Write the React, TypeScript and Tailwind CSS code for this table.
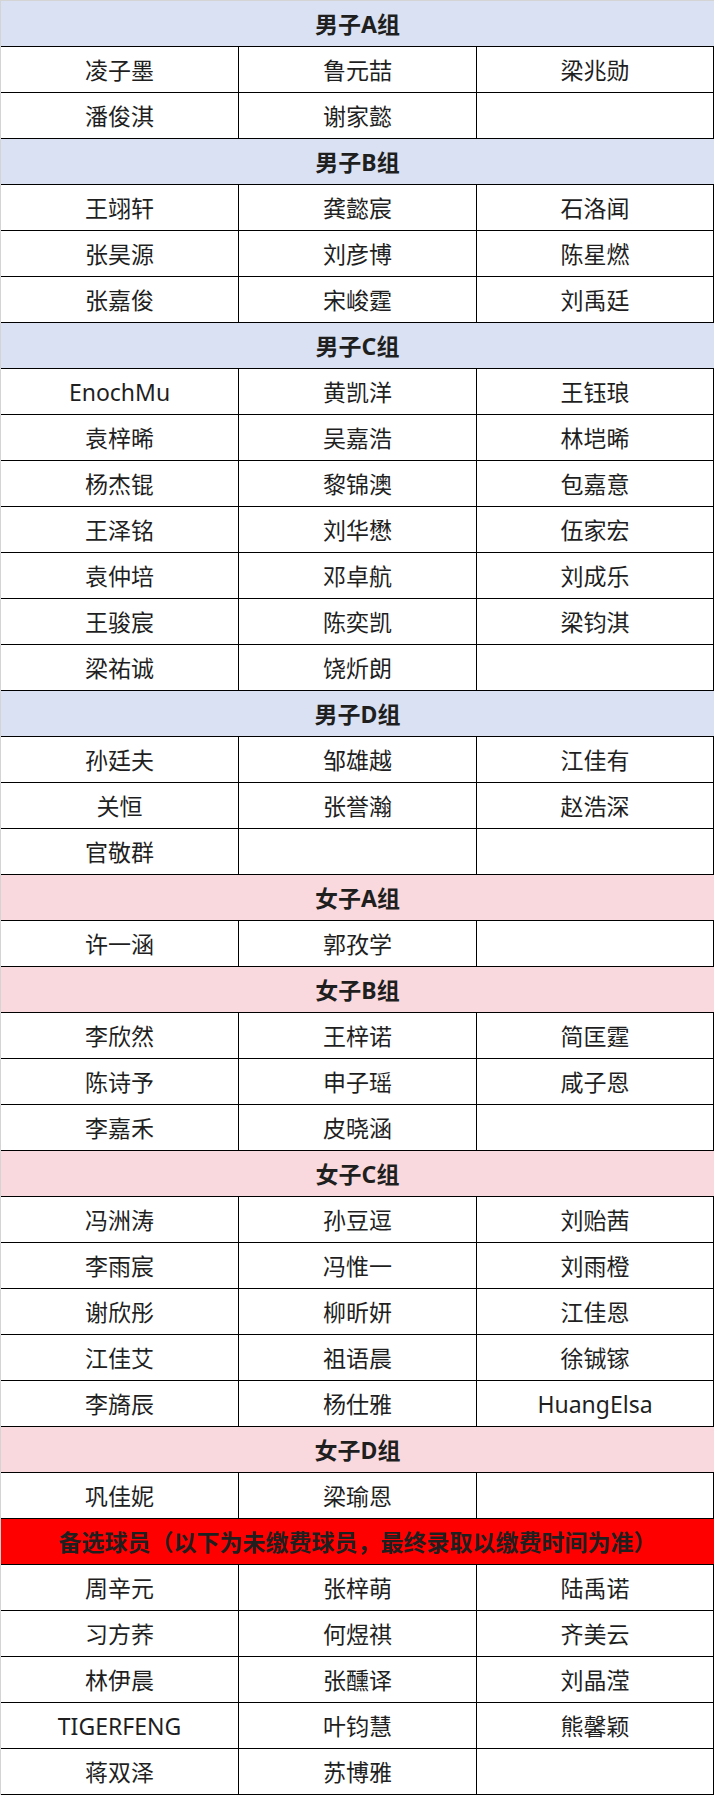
type Group = {
  title: string;
  tone: "blue" | "pink" | "red";
  names: string[];
};

const groups: Group[] = [
  { title: "男子A组", tone: "blue", names: ["凌子墨", "鲁元喆", "梁兆勋", "潘俊淇", "谢家懿"] },
  {
    title: "男子B组",
    tone: "blue",
    names: ["王翊轩", "龚懿宸", "石洛闻", "张昊源", "刘彦博", "陈星燃", "张嘉俊", "宋峻霆", "刘禹廷"],
  },
  {
    title: "男子C组",
    tone: "blue",
    names: [
      "EnochMu", "黄凯洋", "王钰琅",
      "袁梓晞", "吴嘉浩", "林垲晞",
      "杨杰锟", "黎锦澳", "包嘉意",
      "王泽铭", "刘华懋", "伍家宏",
      "袁仲培", "邓卓航", "刘成乐",
      "王骏宸", "陈奕凯", "梁钧淇",
      "梁祐诚", "饶炘朗",
    ],
  },
  {
    title: "男子D组",
    tone: "blue",
    names: ["孙廷夫", "邹雄越", "江佳有", "关恒", "张誉瀚", "赵浩深", "官敬群"],
  },
  { title: "女子A组", tone: "pink", names: ["许一涵", "郭孜学"] },
  {
    title: "女子B组",
    tone: "pink",
    names: ["李欣然", "王梓诺", "简匡霆", "陈诗予", "申子瑶", "咸子恩", "李嘉禾", "皮晓涵"],
  },
  {
    title: "女子C组",
    tone: "pink",
    names: [
      "冯洲涛", "孙豆逗", "刘贻茜",
      "李雨宸", "冯惟一", "刘雨橙",
      "谢欣彤", "柳昕妍", "江佳恩",
      "江佳艾", "祖语晨", "徐铖镓",
      "李旖辰", "杨仕雅", "HuangElsa",
    ],
  },
  { title: "女子D组", tone: "pink", names: ["巩佳妮", "梁瑜恩"] },
  {
    title: "备选球员（以下为未缴费球员，最终录取以缴费时间为准）",
    tone: "red",
    names: [
      "周辛元", "张梓萌", "陆禹诺",
      "习方荞", "何煜祺", "齐美云",
      "林伊晨", "张醺译", "刘晶滢",
      "TIGERFENG", "叶钧慧", "熊馨颖",
      "蒋双泽", "苏博雅",
    ],
  },
];

const toneClass = {
  blue: "bg-[#d9e1f2]",
  pink: "bg-[#f9d9de]",
  red: "bg-[#ff0000]",
};

function chunk(names: string[]) {
  const rows: string[][] = [];
  for (let i = 0; i < names.length; i += 3) {
    const row = names.slice(i, i + 3);
    while (row.length < 3) row.push("");
    rows.push(row);
  }
  return rows;
}

function GroupBlock({ group }: { group: Group }) {
  return (
    <>
      <div
        className={`flex h-[46px] items-center justify-center border-b border-black pt-[1px] text-[23px] font-bold ${toneClass[group.tone]}`}
      >
        {group.title}
      </div>
      {chunk(group.names).map((row, i) => (
        <div key={i} className="grid h-[46px] grid-cols-[238px_238px_237px] border-b border-black">
          {row.map((name, j) => (
            <div key={j} className="flex items-center justify-center border-r border-black pt-[2px]">
              {name}
            </div>
          ))}
        </div>
      ))}
    </>
  );
}

export default function App() {
  return (
    <div
      className="w-[715px] bg-white text-[23px] leading-none text-[#1f1f1f]"
      style={{ fontFamily: '"Noto Sans", "Noto Sans CJK SC", sans-serif' }}
    >
      <div className="w-[714px] border-l border-t border-[#d4d4d4]">
        {groups.map((g) => (
          <GroupBlock key={g.title} group={g} />
        ))}
      </div>
    </div>
  );
}
